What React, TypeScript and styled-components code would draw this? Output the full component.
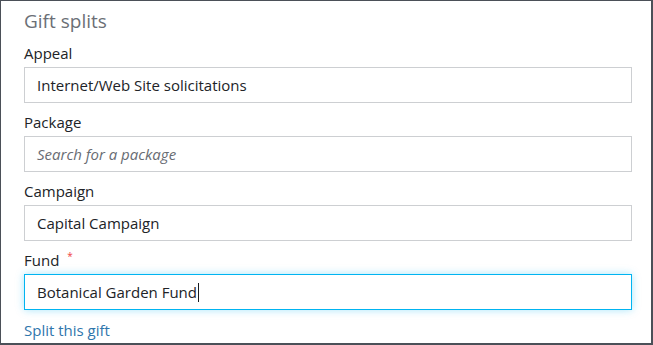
import styled, { createGlobalStyle } from 'styled-components';

const GlobalStyle = createGlobalStyle`
  html, body {
    margin: 0;
    padding: 0;
    background: #ffffff;
  }
  * {
    box-sizing: border-box;
  }
`;

const Panel = styled.section`
  width: 653px;
  height: 345px;
  overflow: hidden;
  padding: 8px 19px 0 23px;
  border: 1px solid #4b5058;
  border-right-width: 2px;
  border-bottom-width: 2px;
  background: #ffffff;
  font-family: 'Open Sans', 'Liberation Sans', sans-serif;
`;

const Heading = styled.h2`
  margin: 0 0 10px;
  font-size: 19px;
  line-height: 24px;
  font-weight: 400;
  color: #6b6f76;
`;

const Field = styled.div`
  display: flex;
  flex-direction: column;
  gap: 4px;
  margin-bottom: 9px;

  & + & {
    margin-top: 0.35px;
  }
`;

const Label = styled.label`
  display: flex;
  align-items: flex-start;
  font-size: 15px;
  line-height: 20px;
  color: #212327;
`;

const Required = styled.span`
  margin-left: 8px;
  font-size: 10px;
  line-height: 12px;
  color: #ef4044;
`;

const InputBox = styled.div<{ $focused?: boolean; $empty?: boolean }>`
  display: flex;
  align-items: center;
  height: 36px;
  padding: 0 11px 0 12px;
  border: 1px solid ${({ $focused }) => ($focused ? '#00b4f1' : '#cdcfd2')};
  box-shadow: ${({ $focused }) => ($focused ? '0 0 8px rgba(0, 180, 241, 0.35)' : 'none')};
  background: #ffffff;
  font-size: 15px;
  color: ${({ $empty }) => ($empty ? '#686c73' : '#212327')};
  font-style: ${({ $empty }) => ($empty ? 'italic' : 'normal')};
  white-space: nowrap;
`;

const Caret = styled.span`
  display: inline-block;
  width: 1px;
  height: 19px;
  margin-left: 1px;
  background: #1a1c1f;
`;

const SplitLink = styled.a`
  display: inline-block;
  margin-top: 1px;
  font-size: 15px;
  line-height: 20px;
  color: #2f76ac;
  text-decoration: none;
  cursor: pointer;
`;

interface FieldProps {
  label: string;
  value?: string;
  placeholder?: string;
  required?: boolean;
  focused?: boolean;
}

const FormField = ({ label, value, placeholder, required, focused }: FieldProps) => (
  <Field>
    <Label>
      {label}
      {required && <Required>*</Required>}
    </Label>
    <InputBox $focused={focused} $empty={!value}>
      {value || placeholder}
      {focused && <Caret />}
    </InputBox>
  </Field>
);

export default function App() {
  return (
    <>
      <GlobalStyle />
      <Panel>
        <Heading>Gift splits</Heading>
        <FormField label="Appeal" value="Internet/Web Site solicitations" />
        <FormField label="Package" placeholder="Search for a package" />
        <FormField label="Campaign" value="Capital Campaign" />
        <FormField label="Fund" value="Botanical Garden Fund" required focused />
        <SplitLink>Split this gift</SplitLink>
      </Panel>
    </>
  );
}
